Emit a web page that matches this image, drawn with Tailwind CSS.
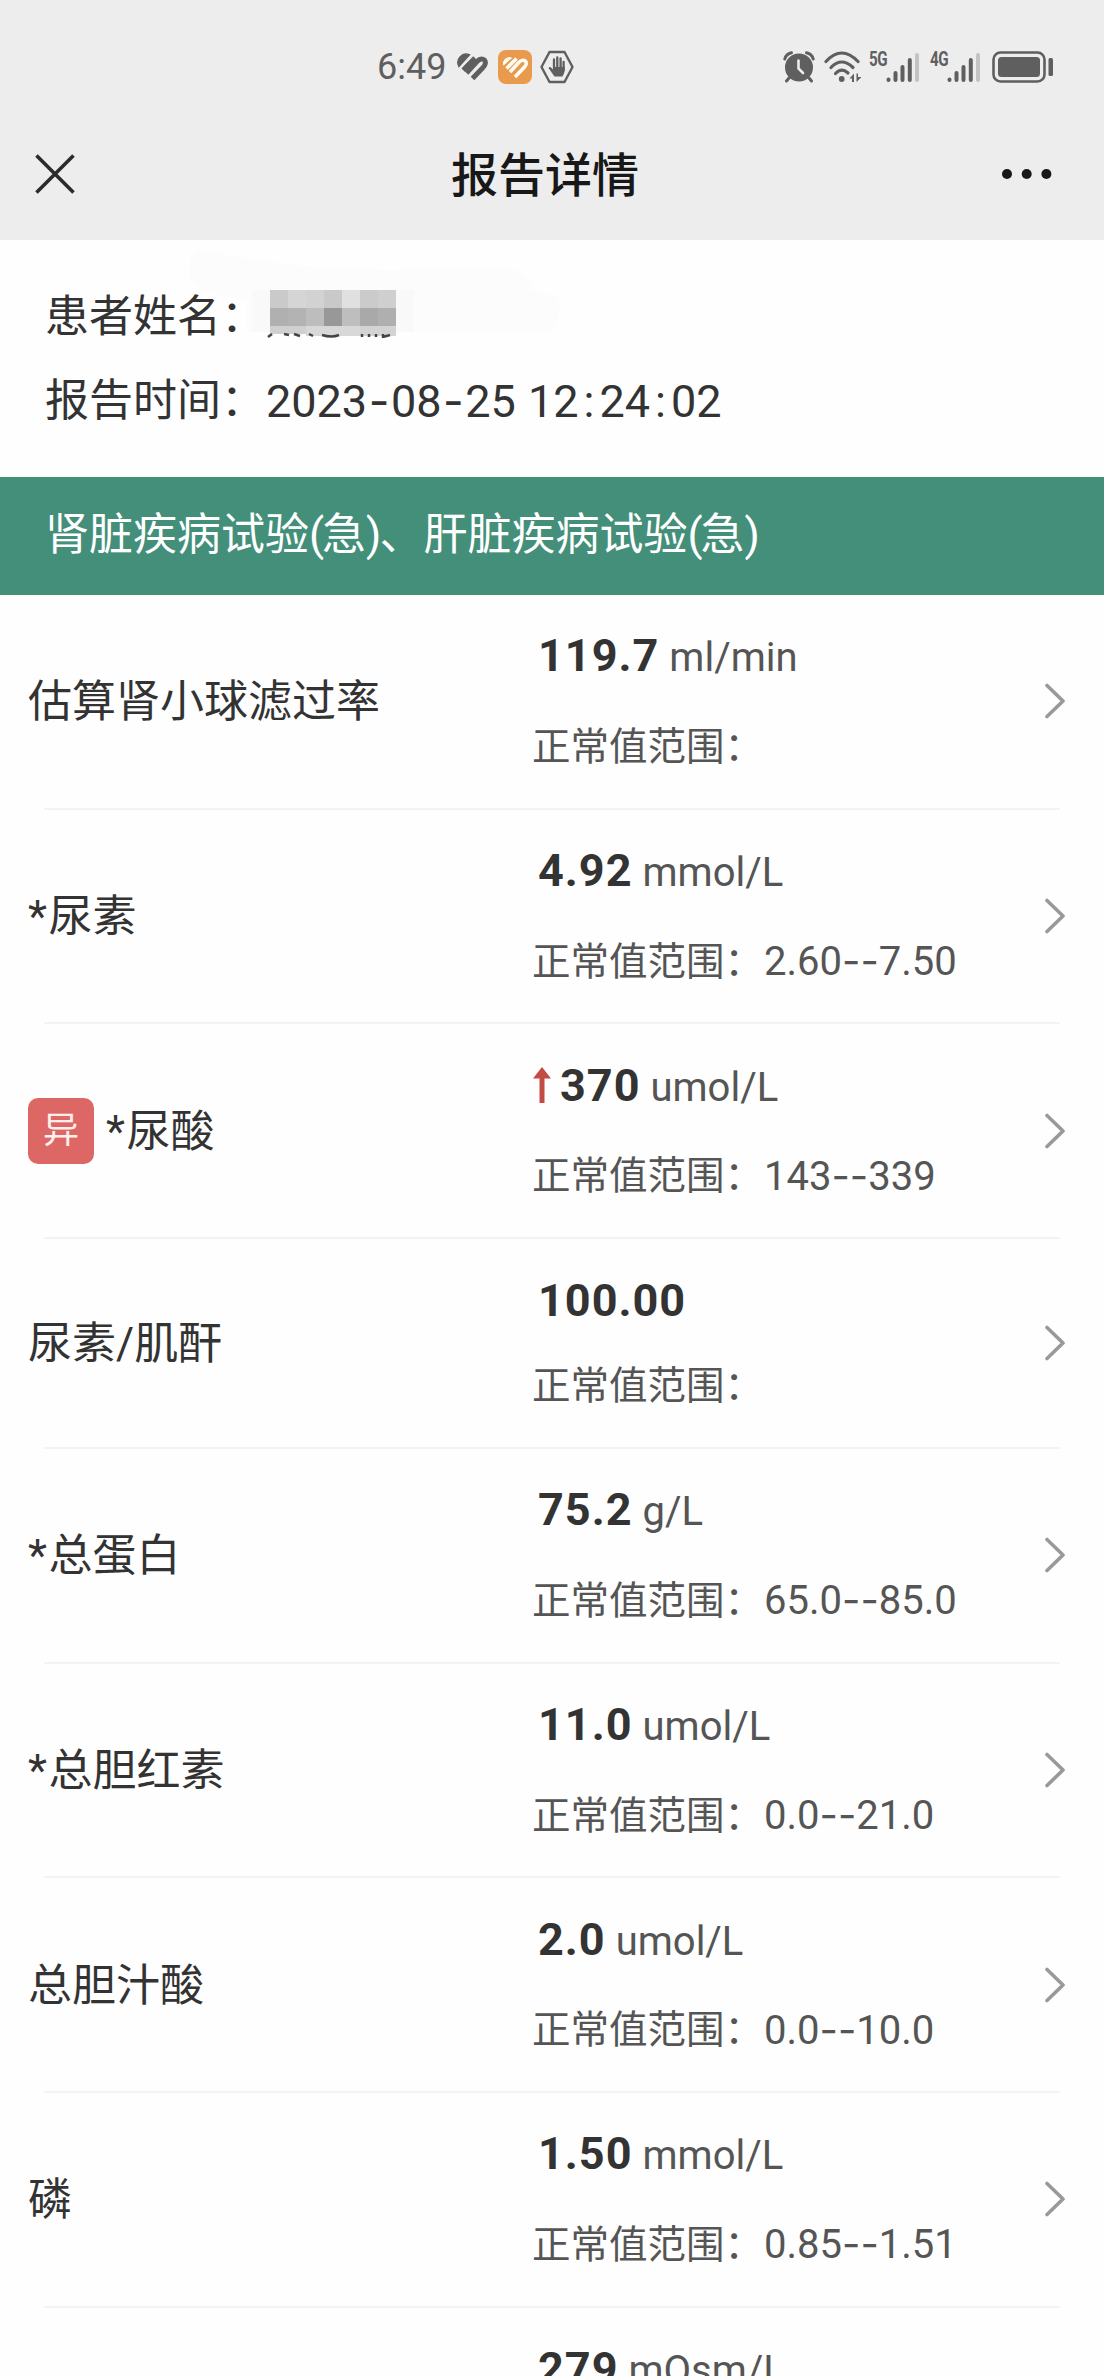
<!DOCTYPE html>
<html lang="zh-CN">
<head>
    <meta charset="UTF-8">
    <meta name="viewport" content="width=device-width, initial-scale=1.0">
    <title>报告详情</title>
    <script src="https://cdn.jsdelivr.net/npm/@tailwindcss/browser@4"></script>
</head>
<body class="h-[2376px] overflow-hidden bg-[#fefefe] font-[Roboto,'Noto_Sans_CJK_SC',sans-serif] text-[#333]">

    <header class="h-[240px] bg-[#ededed]">
        <!-- status bar -->
        <div class="flex h-[133px] items-center justify-between pl-[377px] pr-[50px] text-[#5f5f5f]">
            <div class="flex items-center">
                <span class="w-[79px] text-[36px] leading-none">6:49</span>
                <svg class="h-[28px] w-[34px]" viewBox="0 0 34 28" fill="none">
                    <path d="M3 13 A8 8 0 0 1 13 2 Z" fill="#5f5f5f" stroke="#5f5f5f" stroke-width="2"/>
                    <path d="M7 17 L19 5" stroke="#5f5f5f" stroke-width="5"/>
                    <path d="M10.500 20 L21 8.500 C25 4 31 6 29 11.500 Q28.500 13 27 14.500 L16.500 25.500" stroke="#5f5f5f" stroke-width="5"/>
                    <path d="M13.500 23 L24 12" stroke="#ededed" stroke-width="1.500"/>
                    <path d="M4.500 15.500 L15.500 3" stroke="#ededed" stroke-width="1.200"/>
                </svg>
                <svg class="ml-[8px] h-[34px] w-[34px]" viewBox="0 0 34 34" fill="none">
                    <rect width="34" height="34" rx="8" fill="#ea9a4c"/>
                    <path d="M5.500 15 A6 6 0 0 1 13.500 8 Z" fill="#fffdf5" stroke="#fffdf5"/>
                    <path d="M8.500 18.500 L18.500 8.500" stroke="#fffdf5" stroke-width="3.600"/>
                    <path d="M12 22 L21 12.200 C24.500 8.500 29.500 10.500 28 14.500 Q27.500 16 26.500 17 L17 27" stroke="#fffdf5" stroke-width="3.600"/>
                </svg>
                <svg class="ml-[8px] h-[34px] w-[34px]" viewBox="0 0 34 34" fill="none" stroke="#5f5f5f">
                    <path d="M9.500 2 H24.500 L32.500 17 L24.500 32 H9.500 L1.500 17 Z" stroke-width="2.400" stroke-linejoin="round"/>
                    <path d="M14 9.500 V18 M17.300 7.500 V18 M20.600 8.500 V18 M23.600 12 V20" stroke-width="2.300" stroke-linecap="round"/>
                    <path d="M13 17 H24.700 V21 Q24 24 22.500 26.500 H14.500 Q12 23 8.500 18 Q9.500 16 11.500 18 L13 19.500 Z" fill="#5f5f5f" stroke="none"/>
                </svg>
            </div>
            <div class="flex items-center">
                <svg class="h-[32px] w-[32px]" viewBox="0 0 32 32" fill="none" stroke="#5f5f5f">
                    <circle cx="16" cy="16.500" r="14" fill="#5f5f5f" stroke="none"/>
                    <path d="M1.800 8 Q3 3 8.500 1.800 M30.200 8 Q29 3 23.500 1.800" stroke-width="3" stroke-linecap="round"/>
                    <path d="M6 27 L3.500 30 M26 27 L28.500 30" stroke-width="3" stroke-linecap="round"/>
                    <path d="M15.500 9.500 V17.500 L20 22" stroke="#ededed" stroke-width="2.600" stroke-linecap="round"/>
                </svg>
                <svg class="ml-[9px] h-[32px] w-[38px]" viewBox="0 0 38 32" fill="none" stroke="#5f5f5f" stroke-width="3.200" stroke-linecap="round">
                    <path d="M2 10.500 Q17.500 -6.500 34 10.500"/>
                    <path d="M7 16.500 Q17.500 5.500 29 16.500"/>
                    <path d="M11.500 22.500 Q17.500 16 24 22"/>
                    <circle cx="17.700" cy="28" r="2.900" fill="#5f5f5f" stroke="none"/>
                    <path d="M25.500 27.500 L30 22.500 V31 H28 V27.500 Z M32.500 31 V22.500 H34 V26 H37.500 Z" fill="#5f5f5f" stroke="none"/>
                </svg>
                <div class="relative ml-[7px] h-[32px] w-[52px]">
                    <span class="absolute left-0 top-0 origin-left scale-x-[0.76] text-[20px] font-bold leading-[17px] tracking-[-0.5px]">5G</span>
                    <svg class="absolute left-[17px] top-0 h-[32px] w-[34px]" viewBox="0 0 34 32" stroke="#5f5f5f" stroke-width="4" stroke-linecap="round">
                        <path d="M2.500 28.500 V29 M9.500 22 V29 M16.500 16 V29 M23.800 9 V29"/>
                        <path d="M31 4 V29" stroke="#c3c3c3"/>
                    </svg>
                </div>
                <div class="relative ml-[9px] h-[32px] w-[52px]">
                    <span class="absolute left-0 top-0 origin-left scale-x-[0.76] text-[20px] font-bold leading-[17px] tracking-[-0.5px]">4G</span>
                    <svg class="absolute left-[17px] top-0 h-[32px] w-[34px]" viewBox="0 0 34 32" stroke="#5f5f5f" stroke-width="4" stroke-linecap="round">
                        <path d="M2.500 28.500 V29 M9.500 22 V29 M16.500 16 V29 M23.800 9 V29"/>
                        <path d="M31 4 V29" stroke="#c3c3c3"/>
                    </svg>
                </div>
                <svg class="ml-[10px] h-[32px] w-[62px]" viewBox="0 0 62 32" fill="none">
                    <rect x="1.500" y="1.500" width="51" height="29" rx="7" stroke="#5f5f5f" stroke-width="2.600"/>
                    <rect x="6" y="6" width="42" height="20" rx="3.500" fill="#5f5f5f"/>
                    <rect x="56.500" y="7" width="4.500" height="18" rx="1.500" fill="#5f5f5f"/>
                </svg>
            </div>
        </div>

        <!-- title bar -->
        <div class="flex h-[82px] items-center justify-between pl-[34px] pr-[52px]">
            <svg class="h-[42px] w-[42px]" viewBox="0 0 42 42" stroke="#2b2b2b" stroke-width="3.600">
                <path d="M2.500 2.500 L39.500 39.500 M39.500 2.500 L2.500 39.500"/>
            </svg>
            <h1 class="ml-[12px] pt-[2px] text-[47px] font-medium leading-none text-[#181818]">报告详情</h1>
            <svg class="h-[12px] w-[50px]" viewBox="0 0 50 12" fill="#181818">
                <circle cx="5" cy="6" r="5"/>
                <circle cx="24.700" cy="6" r="5"/>
                <circle cx="44.400" cy="6" r="5"/>
            </svg>
        </div>
    </header>

    <section class="relative flex h-[237px] flex-col pl-[45px] pt-[35px] text-[44px]">
        <!-- smudge left by the privacy eraser -->
        <svg class="absolute left-[187px] top-[10px] h-[86px] w-[380px]" viewBox="0 0 380 86" fill="#fcfcfc">
            <path d="M4 8 Q10 0 22 2 L60 8 Q130 20 200 20 L320 18 Q345 22 345 40 L372 48 Q376 80 355 82 H60 V50 Q0 44 2 22 Z"/>
        </svg>
        <div class="relative flex h-[84px] items-center">
            <span class="w-[207px] whitespace-nowrap">患者姓名：</span>
            <!-- masked name -->
            <svg class="-mt-[9px] h-[50px] w-[164px]" viewBox="0 0 164 50" shape-rendering="crispEdges">
                <rect x="0" y="2" width="162" height="42" fill="#f9f9f9"/>
                <g transform="translate(18 2)">
                    <rect width="18" height="18" fill="#cacaca"/><rect x="18" width="18" height="18" fill="#d5d5d5"/><rect x="36" width="18" height="18" fill="#d2d2d2"/><rect x="54" width="18" height="18" fill="#c9c9c9"/><rect x="72" width="18" height="18" fill="#e0e0e0"/><rect x="90" width="18" height="18" fill="#cbcbcb"/><rect x="108" width="18" height="18" fill="#cfcfcf"/>
                    <rect y="18" width="18" height="18" fill="#b0b0b0"/><rect x="18" y="18" width="18" height="18" fill="#b3b3b3"/><rect x="36" y="18" width="18" height="18" fill="#bdbdbd"/><rect x="54" y="18" width="18" height="18" fill="#989898"/><rect x="72" y="18" width="18" height="18" fill="#bebebe"/><rect x="90" y="18" width="18" height="18" fill="#a9a9a9"/><rect x="108" y="18" width="18" height="18" fill="#afafaf"/>
                    <rect y="36" width="36" height="8" fill="#d0d0d0"/><rect x="36" y="36" width="54" height="10" fill="#d8d8d8"/><rect x="90" y="36" width="36" height="10" fill="#d3d3d3"/>
                </g>
                <path d="M16 49 L20 46 M32 46 L37 47 M42 46 L48 48 M57 46 L61 48 M70 47 Q80 50 87 47 M110 46 V49 M117 46 V49 M124 46 V49 M131 46 V49 L138 47" stroke="#444" stroke-width="2.500" fill="none" shape-rendering="auto"/>
            </svg>
        </div>
        <div class="relative flex h-[84px] items-center">
            <span class="w-[221px] whitespace-nowrap">报告时间：</span>
            <span class="whitespace-nowrap text-[45px]">2023<span class="mx-[1.500px] font-[Inter]">-</span>08<span class="mx-[1.500px] font-[Inter]">-</span>25 <span class="ml-[1px]">12</span><span class="mx-[5px]">:</span>24<span class="mx-[5px]">:</span>02</span>
        </div>
    </section>

    <h2 class="flex h-[118px] items-center bg-[#448f7a] pb-[3px] pl-[45px] text-[44px] text-white"><span>肾脏疾病试验<span class="tracking-[-2px]">(</span>急<span class="tracking-[-2px]">)</span>、肝脏疾病试验<span class="tracking-[-2px]">(</span>急)</span></h2>

    <main id="reportList"></main>

    <script>
        const items = [
            { name: '估算肾小球滤过率', value: '119.7', unit: 'ml/min', range: '' },
            { name: '*尿素', value: '4.92', unit: 'mmol/L', range: '2.60--7.50' },
            { name: '*尿酸', value: '370', unit: 'umol/L', range: '143--339', high: true },
            { name: '尿素/肌酐', value: '100.00', unit: '', range: '' },
            { name: '*总蛋白', value: '75.2', unit: 'g/L', range: '65.0--85.0' },
            { name: '*总胆红素', value: '11.0', unit: 'umol/L', range: '0.0--21.0' },
            { name: '总胆汁酸', value: '2.0', unit: 'umol/L', range: '0.0--10.0' },
            { name: '磷', value: '1.50', unit: 'mmol/L', range: '0.85--1.51' },
            { name: '', value: '279', unit: 'mOsm/L', range: '' }
        ];

        const badge = '<span class="mr-[12px] -mt-[2px] flex h-[66px] w-[66px] items-center justify-center rounded-[10px] bg-[#dc6765] text-[36px] leading-none text-[#fff0ee]">异</span>';
        const arrow = '<svg class="-ml-[5px] mr-[9px] h-[36px] w-[18px]" viewBox="0 0 18 36" fill="#c34b45"><path d="M9 0 L18 11.500 H11.500 V36 H6.500 V11.500 H0 Z"/></svg>';
        const chevron = '<svg class="h-[36px] w-[22px]" viewBox="0 0 22 36" fill="none" stroke="#999" stroke-width="3.600" stroke-linecap="round" stroke-linejoin="round"><path d="M3 2.500 L19 18 L3 33.500"/></svg>';

        document.getElementById('reportList').innerHTML = items.map((item) => `
            <div class="flex items-center pl-[28px] pr-[38px] ${item.unit ? 'h-[212.7px]' : 'h-[208px]'}">
                <div class="flex w-[504px] items-center pt-[2px] text-[44px]">${item.high ? badge : ''}<span>${item.name.replace('*', '<span class="mr-[1.500px]">*</span>')}</span></div>
                <div class="flex flex-1 flex-col ${item.unit ? 'gap-[31px]' : 'gap-[26px]'}">
                    <div class="flex h-[60px] items-center pl-[6px]">
                        ${item.high ? arrow : ''}
                        <div class="flex items-baseline leading-none">
                            <span class="text-[45px] font-bold tracking-[1px]">${item.value}</span>
                            <span class="ml-[10px] text-[40px] text-[#555]">${item.unit}</span>
                        </div>
                    </div>
                    ${item.name ? `<div class="flex h-[60px] items-center text-[#555]">
                        <span class="w-[232px] whitespace-nowrap text-[38.5px]">正常值范围：</span>
                        <span class="text-[40px]">${item.range.replace('--', '<span class="font-[Inter]">--</span>')}</span>
                    </div>` : '<div class="h-[60px]"></div>'}
                </div>
                ${item.name ? chevron : ''}
            </div>
            <div class="mx-[44px] h-[2px] bg-[#f3f3f3]"></div>`).join('');
    </script>
</body>
</html>
